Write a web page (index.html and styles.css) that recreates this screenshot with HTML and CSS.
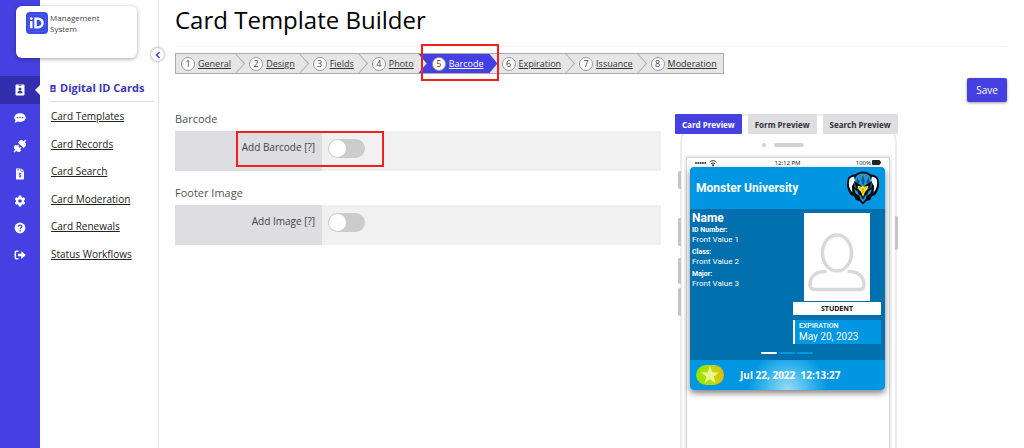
FILE: index.html
```html
<!DOCTYPE html>
<html lang="en">
<head>
<meta charset="utf-8">
<title>Card Template Builder</title>
<link rel="stylesheet" href="styles.css">
</head>
<body>
<div class="app">
  <nav class="rail" aria-label="Modules">
    <a class="rail-item active" href="#" aria-label="Digital ID Cards"><svg width="12" height="12" viewBox="0 0 12 12"><path fill="#fff" fill-rule="evenodd" d="M2.500.5h7a1 1 0 0 1 1 1v9a1 1 0 0 1-1 1h-7a1 1 0 0 1-1-1v-9a1 1 0 0 1 1-1zM4.500 1.300v.8h3v-.8zM6 3.500a1.500 1.500 0 1 0 0 3 1.500 1.500 0 0 0 0-3zM3.500 9.200h5c0-1.400-.8-2.200-1.800-2.200H5.300c-1 0-1.800.8-1.800 2.200z"/></svg></a>
    <a class="rail-item" href="#" aria-label="Messages"><svg width="12" height="12" viewBox="0 0 12 12"><path fill="#fff" d="M6 1.200c3.300 0 5.700 1.900 5.700 4.400S9.300 10 6 10c-.8 0-1.600-.1-2.300-.4-.9.700-2 1.200-3.400 1.200.6-.7 1-1.400 1.200-2.100C.7 7.900.3 6.800.3 5.600.3 3.100 2.700 1.200 6 1.200z"/><g fill="#4540e1"><circle cx="3.500" cy="5.600" r=".8"/><circle cx="6" cy="5.600" r=".8"/><circle cx="8.500" cy="5.600" r=".8"/></g></svg></a>
    <a class="rail-item" href="#" aria-label="Integrations"><svg width="16" height="16" viewBox="0 0 16 16"><g transform="rotate(-45 8 8)" fill="#fff"><path d="M-.5 7.200H2V6.500c0-1.500 1-2.500 2.300-2.500h1.500v1.600h2V7H6.600v2h1.200v1.400h-2V12H4.300C3 12 2 11 2 9.500v-.7H-.5z"/><path d="M16.500 7.200H14V6.500C14 5 13 4 11.700 4H9v8h2.700c1.300 0 2.300-1 2.300-2.500v-.7h2.500z"/></g></svg></a>
    <a class="rail-item" href="#" aria-label="Billing"><svg width="12" height="12" viewBox="0 0 12 12"><path fill="#fff" d="M2 .4h4.600v3.200H10v7a.9.900 0 0 1-.9.900H2.900a.9.900 0 0 1-.9-.9zM7.300.4L10 3H7.300z"/><path fill="none" stroke="#4540e1" stroke-width=".8" d="M3 2h2M7.400 5.700C6.600 5 4.800 5.200 4.900 6.200c.1 1 2.300.7 2.400 1.800.1 1-1.800 1.100-2.600.4M6 4.600v5"/></svg></a>
    <a class="rail-item" href="#" aria-label="Settings"><svg width="12" height="12" viewBox="0 0 12 12"><path fill="#fff" fill-rule="evenodd" d="M4.800.6h2.400l.3 1.500 1 .6 1.500-.5 1.200 2-1.100 1v1.600l1.100 1-1.200 2-1.500-.5-1 .6-.3 1.500H4.800l-.3-1.500-1-.6-1.500.5-1.200-2 1.100-1V5.200l-1.100-1 1.200-2 1.500.5 1-.6zM6 4.200a1.800 1.800 0 1 0 0 3.600 1.800 1.800 0 0 0 0-3.600z"/></svg></a>
    <a class="rail-item" href="#" aria-label="Help"><svg width="12" height="12" viewBox="0 0 12 12"><circle cx="6" cy="6" r="5.400" fill="#fff"/><path fill="none" stroke="#4540e1" stroke-width="1.300" d="M4.200 4.700C4.400 2.600 7.800 2.600 7.800 4.600c0 1.300-1.700 1.200-1.700 2.600"/><circle cx="6.100" cy="8.800" r=".8" fill="#4540e1"/></svg></a>
    <a class="rail-item" href="#" aria-label="Sign out"><svg width="12" height="12" viewBox="0 0 12 12"><path fill="none" stroke="#fff" stroke-width="1.500" d="M4.500 2.200H2.300a1 1 0 0 0-1 1v5.600a1 1 0 0 0 1 1h2.200"/><path fill="#fff" d="M4 4.700h3.300V2l4.400 4-4.400 4V7.300H4z"/></svg></a>
  </nav>

  <aside class="sidebar">
    <div class="brand">
      <svg width="22" height="22" viewBox="0 0 22 22" role="img" aria-label="iD"><rect width="22" height="22" rx="4" fill="#3b4be4"/><rect x="2.500" y="2.500" width="17" height="17" rx="3" fill="none" stroke="#5565ea" stroke-width=".6"/><circle cx="5.300" cy="6.600" r="1.400" fill="#fff"/><path fill="none" stroke="#fff" stroke-width="2.500" d="M5.300 9v7.300M9.500 6.800v8.400h2.700c5.800 0 5.800-8.400 0-8.400z"/></svg>
      <span>Management<br>System</span>
    </div>
    <button class="collapse" aria-label="Collapse menu"><svg width="6" height="8" viewBox="0 0 6 8"><path d="M4.500 1L1.500 4l3 3" fill="none" stroke="#4540e1" stroke-width="1.500"/></svg></button>
    <h2 class="side-title"><svg width="6" height="7" viewBox="0 0 7 8"><path fill="#3a36b8" fill-rule="evenodd" d="M.5 0h6v8h-6zM3.500 1.600a1.100 1.100 0 1 0 0 2.200 1.100 1.100 0 0 0 0-2.200zM1.600 6.200h3.800c0-1.200-.6-1.700-1.900-1.700s-1.900.5-1.900 1.700z"/></svg>Digital ID Cards</h2>
    <ul class="side-links">
      <li><a href="#">Card Templates</a></li>
      <li><a href="#">Card Records</a></li>
      <li><a href="#">Card Search</a></li>
      <li><a href="#">Card Moderation</a></li>
      <li><a href="#">Card Renewals</a></li>
      <li><a href="#">Status Workflows</a></li>
    </ul>
  </aside>

  <main class="main">
    <h1 class="title">Card Template Builder</h1>
    <ol class="wizard">
      <li><a href="#"><b>1</b><span>General</span></a></li>
      <li><a href="#"><b>2</b><span>Design</span></a></li>
      <li><a href="#"><b>3</b><span>Fields</span></a></li>
      <li><a href="#"><b>4</b><span>Photo</span></a></li>
      <li class="current"><a href="#" aria-current="step"><b>5</b><span>Barcode</span></a><i class="mark mark-step"></i></li>
      <li><a href="#"><b>6</b><span>Expiration</span></a></li>
      <li><a href="#"><b>7</b><span>Issuance</span></a></li>
      <li><a href="#"><b>8</b><span>Moderation</span></a></li>
    </ol>
    <div class="actions"><button class="save">Save</button></div>

    <div class="columns">
      <form class="settings">
        <h3>Barcode</h3>
        <div class="field">
          <label for="barcode">Add Barcode [?]</label>
          <div class="control"><input class="switch" type="checkbox" role="switch" id="barcode"></div>
          <i class="mark mark-field"></i>
        </div>
        <h3>Footer Image</h3>
        <div class="field">
          <label for="image">Add Image [?]</label>
          <div class="control"><input class="switch" type="checkbox" role="switch" id="image"></div>
        </div>
      </form>

      <section class="preview">
        <div class="tabs">
          <button class="tab selected">Card Preview</button>
          <button class="tab">Form Preview</button>
          <button class="tab">Search Preview</button>
        </div>
        <div class="phone">
          <i class="key key-mute"></i><i class="key key-up"></i><i class="key key-down"></i><i class="key key-low"></i><i class="key key-power"></i>
          <div class="speaker"><i class="lens"></i><i class="slot"></i></div>
          <div class="screen">
            <div class="status">
              <span class="signal"><svg width="24" height="8" viewBox="0 0 24 8"><g fill="#333"><circle cx="2" cy="4" r="1"/><circle cx="4.300" cy="4" r="1"/><circle cx="6.600" cy="4" r="1"/><circle cx="8.900" cy="4" r="1"/><circle cx="11.200" cy="4" r="1"/><circle cx="19" cy="6.300" r="1"/></g><path d="M15.500 3.200c2-2 5-2 7 0M17 4.900c1.200-1.200 2.800-1.200 4 0" fill="none" stroke="#333"/></svg></span>
              <span>12:12 PM</span>
              <span class="battery">100% <svg width="9" height="5" viewBox="0 0 9 5"><rect width="8" height="5" rx="1" fill="#222"/><path d="M8.500 1.500v2" stroke="#222"/></svg></span>
            </div>
            <article class="card">
              <header class="card-head">
                <h4>Monster University</h4>
                <svg width="34" height="36" viewBox="0 0 38 40" role="img" aria-label="Eagle crest">
                  <path fill="#060a10" d="M19 1.500c4 0 6 1.500 8.500 3 4.500.5 7.500 2 8.500 5l1 6c0 5-2 9-4.500 12.500l-3.500 1-2 4.500-4 1-4 4-4-4-4-1-2-4.500-3.500-1C3 24.500 1 20.500 1 15.500l1-6c1-3 4-4.500 8.500-5C13 3 15 1.500 19 1.500z"/>
                  <path fill="#fff" d="M9 7.500c-3 .3-4.800 1.500-5.500 3.500-1 5 0 9.500 3.500 14l-.3-7 3.300-6.500zM29 7.500c3 .3 4.800 1.500 5.500 3.500 1 5 0 9.500-3.500 14l.3-7-3.300-6.500z"/>
                  <path fill="#2497d3" d="M19 3.800c3.500 0 6 1.200 8 3.500 1.500 4 1.800 8.500 1.500 12L23 22h-8l-5.500-2.700c-.3-3.500 0-8 1.500-12 2-2.300 4.500-3.500 8-3.500z"/>
                  <path fill="#0a5c8d" d="M19 5.500l2 6-2 7-2-7zM12.500 8l3 5-2 3-2-3zM25.500 8l-3 5 2 3 2-3z"/>
                  <path fill="#060a10" d="M9.500 12.500l7 4.500 2.500 3 2.500-3 7-4.500-1.500 7-4 2h-8l-4-2z"/>
                  <path fill="#f3e239" d="M13 17.500l4.500 1L19 17.500l1.500 1 4.500-1c0 3-1.500 5-3.500 6.500L19 30l-2.500-6c-2-1.500-3.500-3.500-3.500-6.500z"/>
                  <path fill="#a58a12" d="M18.500 20h1v5l-.5 2-.5-2zM15 19.300l2 .6-1 .9zM23 19.300l-2 .6 1 .9z"/>
                  <path fill="#2497d3" d="M9 21l4 2.500 1.500 5-3.500-2zM29 21l-4 2.500-1.500 5 3.500-2zM14.500 27l2 1.500 2.500 4.500 2.500-4.500 2-1.500-1.500 5-3 4-3-4z"/>
                </svg>
              </header>
              <div class="card-body">
                <div class="holder">
                  <h5>Name</h5>
                  <dl>
                    <dt>ID Number:</dt><dd>Front Value 1</dd>
                    <dt>Class:</dt><dd>Front Value 2</dd>
                    <dt>Major:</dt><dd>Front Value 3</dd>
                  </dl>
                </div>
                <div class="badge">
                  <div class="photo"><svg width="60" height="60" viewBox="0 0 60 60"><g fill="none" stroke="#d8d8d8" stroke-width="3.500"><ellipse cx="30" cy="20" rx="14.500" ry="18"/><path d="M18 38.500c-9 0-15 5-15 13 0 3 1.500 5 4.500 5h45c3 0 4.500-2 4.500-5 0-8-6-13-15-13" stroke-linecap="round"/></g></svg></div>
                  <div class="role">STUDENT</div>
                  <div class="expires"><strong>EXPIRATION</strong><span>May 20, 2023</span></div>
                </div>
                <div class="pager"><i class="on"></i><i></i><i></i></div>
              </div>
              <footer class="card-foot">
                <span class="pill"><svg width="20" height="20" viewBox="0 0 20 20"><path fill="#edf68a" d="M10 1l2.300 6.300 6.700.2-5.300 4.100 1.900 6.400L10 14.200 4.400 18l1.900-6.400L1 7.500l6.700-.2z"/></svg></span>
                <time>Jul 22, 2022&nbsp; 12:13:27</time>
              </footer>
            </article>
          </div>
        </div>
      </section>
    </div>
  </main>
</div>
</body>
</html>
```
FILE: styles.css
```css
* { box-sizing: border-box; }
body { margin: 0; font-family: "Open Sans", "Noto Sans", sans-serif; color: #222; background: #fff; }
h1, h2, h3, h4, h5, ul, ol, dl, dd { margin: 0; padding: 0; font-weight: 400; }
ul, ol { list-style: none; }
button { border: 0; padding: 0; font-family: inherit; cursor: pointer; }
svg { display: block; flex: none; }

.app { display: grid; grid-template-columns: 40px 119px minmax(0, 1fr); height: 100vh; position: relative; overflow: hidden; }

.rail { display: grid; grid-template-rows: repeat(3, 28px) repeat(3, 27px) 28px; align-content: start; background: #4540e1; padding-top: 76px; }
.rail-item { display: flex; align-items: center; justify-content: center; position: relative; }
.rail-item.active { background: #322eae; }
.rail-item.active::after { content: ""; position: absolute; right: 0; border: 5px solid transparent; border-right-color: #fff; border-left: 0; }

.sidebar { position: relative; border-right: 1px solid #e4e4e4; padding: 79px 4px 0 10px; }
.brand { position: absolute; left: -24px; top: 6px; width: 121px; height: 52px; background: #fff; border-radius: 6px; box-shadow: 0 1px 4px rgba(0, 0, 0, .35); display: flex; gap: 2px; padding: 6px 10px; font-size: 8px; line-height: 11px; color: #444; }
.collapse { position: absolute; right: -6px; top: 48px; width: 13px; height: 13px; border-radius: 50%; background: #fff; box-shadow: 0 0 3px rgba(0, 0, 0, .5); display: flex; align-items: center; justify-content: center; }
.side-title { display: flex; align-items: center; gap: 4px; font-weight: 700; font-size: 11px; line-height: 18px; color: #3a36b8; border-bottom: 1px solid #ddd; padding-bottom: 4px; white-space: nowrap; }
.side-links { display: grid; align-content: space-between; height: 166px; padding: 5px 1px; }
.side-links li { font-size: 10px; line-height: 18px; white-space: nowrap; }
.side-links a { color: #222; text-underline-offset: 1px; }

.main { display: flex; flex-direction: column; padding: 0 17px 0 16px; min-height: 0; }
.title { font-size: 24px; line-height: 32px; color: #000; padding: 4px 0 10px; border-bottom: 1px solid #f2f2f2; }

.wizard { display: flex; align-self: flex-start; margin-top: 6px; height: 21px; border: 1px solid #aaa; background: #e6e6e6; }
.wizard li { position: relative; }
.wizard a { position: relative; z-index: 1; display: flex; align-items: center; height: 100%; gap: 3px; padding: 0 13px 0 5px; font-size: 9px; color: #333; text-decoration: none; }
.wizard span { text-decoration: underline; }
.wizard b { width: 14px; height: 14px; border: 1px solid #999; border-radius: 50%; background: #fff; font-weight: 400; line-height: 12px; text-align: center; color: #444; }
.wizard li::after { content: ""; position: absolute; right: 1px; top: 2px; width: 14px; height: 14px; border: solid #aaa; border-width: 1px 1px 0 0; transform: scaleX(.9) rotate(45deg); }
.wizard li:last-child::after, .wizard .current::after { display: none; }
.wizard li:last-child a { padding-right: 6px; }
.wizard .current::before { content: ""; position: absolute; inset: 0 -1px 0 -8px; background: #4540e1; clip-path: polygon(0 0, calc(100% - 8px) 0, 100% 50%, calc(100% - 8px) 100%, 0 100%, 8px 50%); }
.wizard .current a { color: #fff; }

.mark { position: absolute; border: 2px solid #f2201f; pointer-events: none; z-index: 3; }
.mark-step { inset: -10px -2px -8px -6px; }
.mark-field { left: 61px; top: 0; width: 148px; height: 36px; }

.actions { display: flex; justify-content: flex-end; margin-top: 4px; }
.save { width: 40px; height: 24px; border-radius: 2px; background: #4540e1; color: #fff; font-size: 10px; box-shadow: 0 1px 3px rgba(0, 0, 0, .4); }

.columns { flex: 1; display: grid; grid-template-columns: minmax(0, 1fr) 332px; gap: 14px; min-height: 0; }
.settings { padding-top: 8px; }
.settings h3 { font-size: 11px; line-height: 18px; color: #555; margin-bottom: 3px; }
.field { position: relative; display: grid; grid-template-columns: 147px 1fr; height: 40px; background: #f1f1f1; margin-bottom: 13px; }
.field label { background: #dedde2; text-align: right; padding: 8px 7px; font-size: 10px; line-height: 16px; color: #444; }
.control { padding: 8px 6px; }
.switch { appearance: none; display: block; margin: 0; width: 37px; height: 19px; border-radius: 10px; background: #ccc; }
.switch::before { content: ""; display: block; width: 17px; height: 17px; margin: 1px; border-radius: 50%; background: #fff; }
.switch:checked { background: #4540e1; padding-left: 18px; }

.preview { display: flex; flex-direction: column; padding-top: 12px; min-height: 0; }
.tabs { display: flex; gap: 6px; position: relative; z-index: 1; }
.tab { height: 20px; padding: 0 7px; border-radius: 1px; background: #dedde2; font-weight: 700; font-size: 8px; color: #333; white-space: nowrap; }
.tab.selected { background: #4540e1; color: #fff; }

.phone { position: relative; flex: 1 0 auto; width: 217px; margin: -20px 0 0 5px; padding: 22px 5px 0 4px; border: 2px solid #ececec; border-bottom: 0; border-radius: 30px 30px 0 0; display: flex; flex-direction: column; }
.speaker { display: flex; align-items: center; gap: 8px; height: 13px; margin-bottom: 6px; padding-left: 76px; }
.lens { width: 4px; height: 4px; border-radius: 50%; background: #d2d2d2; }
.slot { width: 30px; height: 4px; border-radius: 2px; background: #d2d2d2; }
.screen { flex: 1; padding: 0 4px 0 3px; border: 1px solid #d4d4d4; border-bottom: 0; box-shadow: 0 0 0 2px #f0f0f0; }
.key { position: absolute; left: -4px; width: 3px; border-radius: 2px 0 0 2px; background: #c4c4c4; }
.key-mute { top: 55px; height: 18px; }
.key-up { top: 102px; height: 28px; }
.key-down { top: 142px; height: 26px; }
.key-low { top: 172px; height: 28px; }
.key-power { left: auto; right: -3px; top: 100px; height: 34px; border-radius: 0 2px 2px 0; }
.status { display: grid; grid-template-columns: 1fr auto 1fr; align-items: center; height: 9px; padding: 0 4px; font-size: 6px; }
.battery { display: flex; align-items: center; justify-content: flex-end; gap: 1px; }

.card { border-radius: 4px; overflow: hidden; box-shadow: 0 3px 6px rgba(0, 0, 0, .5); color: #fff; font-family: Roboto, sans-serif; }
.card-head { display: flex; align-items: center; justify-content: space-between; height: 42px; padding: 0 5px 0 6px; background: #0096e1; }
.card-head h4 { font-size: 12px; font-weight: 700; }
.card-body { display: grid; grid-template-columns: 1fr 88px; align-content: start; height: 151px; padding: 4px 4px 0 2px; background: #006fae; }
.holder h5 { font-size: 12px; line-height: 10px; font-weight: 700; }
.holder dl { padding-top: 3px; }
.holder dt { font-size: 7px; line-height: 9px; font-weight: 700; }
.holder dd { font-size: 8px; line-height: 10px; margin-bottom: 3px; }
.badge { display: flex; flex-direction: column; align-items: center; }
.photo { display: flex; justify-content: center; align-items: flex-end; width: 66px; height: 88px; padding-bottom: 8px; background: #fff; }
.role { align-self: stretch; margin-top: 1px; background: #fff; color: #111; text-align: center; font: 700 7px/13px "Open Sans", sans-serif; }
.expires { align-self: stretch; margin-top: 5px; padding: 1px 4px; background: #0096e1; border-left: 2px solid #fff; font-size: 10px; line-height: 12px; display: grid; }
.expires strong { font-size: 7px; line-height: 10px; font-weight: 500; }
.pager { grid-column: 1 / -1; display: flex; justify-content: center; gap: 2px; padding-top: 8px; }
.pager i { width: 16px; height: 2px; border-radius: 1px; background: #0096e1; }
.pager .on { background: #fff; }
.card-foot { display: flex; align-items: center; gap: 16px; height: 30px; padding: 0 6px; background: radial-gradient(circle 40px at 50% 100%, #9bdcf8, #35b4ee 60%, #0096e1); font: 700 10px/14px "Open Sans", sans-serif; white-space: nowrap; }
.pill { display: flex; justify-content: center; width: 28px; height: 20px; border-radius: 10px; background: linear-gradient(90deg, #8fe500, #b8dc10 60%, #e8b800); }
```
